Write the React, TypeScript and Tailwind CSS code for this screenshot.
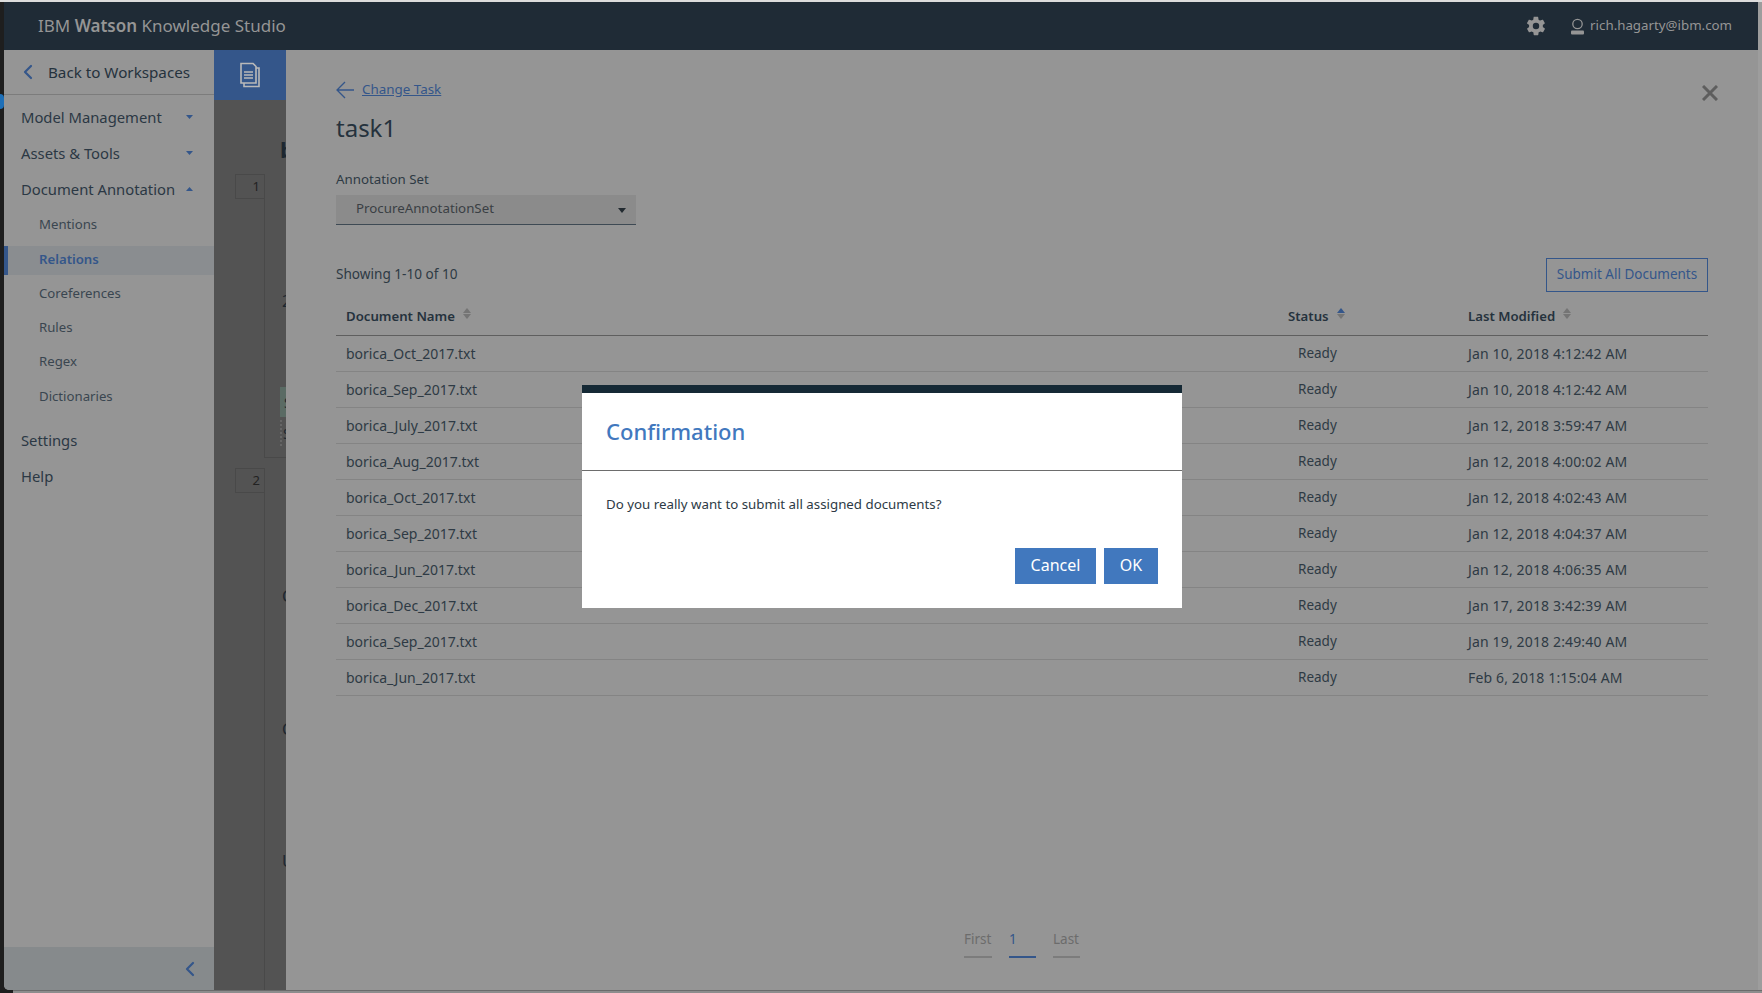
import React from "react";
import { ChevronLeft } from "lucide-react";

const FONT = "font-['Noto_Sans',sans-serif]";

const docs = [
  ["borica_Oct_2017.txt", "Jan 10, 2018 4:12:42 AM"],
  ["borica_Sep_2017.txt", "Jan 10, 2018 4:12:42 AM"],
  ["borica_July_2017.txt", "Jan 12, 2018 3:59:47 AM"],
  ["borica_Aug_2017.txt", "Jan 12, 2018 4:00:02 AM"],
  ["borica_Oct_2017.txt", "Jan 12, 2018 4:02:43 AM"],
  ["borica_Sep_2017.txt", "Jan 12, 2018 4:04:37 AM"],
  ["borica_Jun_2017.txt", "Jan 12, 2018 4:06:35 AM"],
  ["borica_Dec_2017.txt", "Jan 17, 2018 3:42:39 AM"],
  ["borica_Sep_2017.txt", "Jan 19, 2018 2:49:40 AM"],
  ["borica_Jun_2017.txt", "Feb 6, 2018 1:15:04 AM"],
];

const Caret = ({ up, color = "#34568a", w = 7, h = 4 }: { up?: boolean; color?: string; w?: number; h?: number }) => (
  <svg width={w} height={h} viewBox="0 0 8 5" preserveAspectRatio="none" className="shrink-0">
    <path d={up ? "M0 5 L4 0 L8 5 Z" : "M0 0 L4 5 L8 0 Z"} fill={color} />
  </svg>
);

const SortIcon = ({ active }: { active?: boolean }) => (
  <span className="ml-[8px] flex flex-col gap-[1px] -translate-y-[3px]">
    <Caret up w={8} h={5} color={active ? "#34568a" : "#757575"} />
    <Caret w={8} h={5} color="#757575" />
  </span>
);

const NavItem = ({ label, open }: { label: string; open?: boolean }) => (
  <div className="flex h-9 items-center justify-between pr-[21px] pl-[17px] text-[14.8px] text-[#2b3844]">
    <span>{label}</span>
    {open !== undefined && <Caret up={open} />}
  </div>
);

const SubItem = ({ label, h = "h-[34px]" }: { label: string; h?: string }) => (
  <div className={`flex items-center pl-[35px] text-[13.2px] text-[#3a4650] ${h}`}>{label}</div>
);

const Sidebar = () => (
  <aside className="flex w-[210px] shrink-0 flex-col rounded-bl-[5px] bg-[#959595]">
    <div className="flex h-[45px] items-center border-b border-[#7c7c7c]">
      <ChevronLeft size={24} strokeWidth={2.2} className="ml-[12px] text-[#34568a]" />
      <span className="ml-[8px] text-[15.2px] text-[#25323d]">Back to Workspaces</span>
    </div>
    <div className="mt-[4px]">
      <NavItem label="Model Management" open={false} />
      <NavItem label="Assets & Tools" open={false} />
      <NavItem label="Document Annotation" open />
      <SubItem label="Mentions" h="h-[39px] pb-[3px]" />
      <div className="flex h-[29px] items-center border-l-4 border-[#34568a] bg-[#8a8d90] pb-[2px] pl-[31px] text-[13.2px] font-semibold text-[#34568a]">
        Relations
      </div>
      <SubItem label="Coreferences" h="h-[36px] pt-[1px]" />
      <SubItem label="Rules" />
      <SubItem label="Regex" />
      <SubItem label="Dictionaries" h="h-[35px]" />
      <div className="h-[8px]" />
      <NavItem label="Settings" />
      <NavItem label="Help" />
    </div>
    <div className="mt-auto flex h-[43px] items-center justify-end rounded-bl-[5px] bg-[#868a8c] pr-[12px]">
      <ChevronLeft size={24} strokeWidth={2.2} className="text-[#34568a]" />
    </div>
  </aside>
);

// letters of the document view that stick out from under the task panel
const peeking = [
  { top: "top-[39px]", cls: "left-[66px] text-[22px] font-bold", text: "b" },
  { top: "top-[191px]", cls: "left-[68px] text-[16px]", text: "2" },
  { top: "top-[486px]", cls: "left-[68px] text-[16px]", text: "C" },
  { top: "top-[619px]", cls: "left-[68px] text-[16px]", text: "C" },
  { top: "top-[751px]", cls: "left-[68px] text-[16px]", text: "U" },
];

const Backdrop = () => (
  <div className="flex w-[72px] shrink-0 flex-col bg-[#535353]">
    <div className="flex h-[50px] shrink-0 items-center justify-center bg-[#34568a]">
      <svg width="22" height="26" viewBox="0 0 22 26" fill="none" stroke="#b9b9b9" strokeWidth="1.6">
        <path d="M2 1.500 H14 L17 4.500 V21 H2 Z" />
        <path d="M17 6 H20 V24.500 H5 V21" />
        <path d="M5 10 H14 M5 13 H14 M5 16 H14" />
      </svg>
    </div>
    <div className="relative flex-1 overflow-hidden text-[#1d2730]">
      <div className="absolute top-[74px] left-[21px] flex h-[25px] w-[30px] items-center justify-end border border-[#494949] pr-[4px] text-[13px] text-[#222]">
        1
      </div>
      <div className="absolute top-[74px] left-[50px] h-[284px] w-[40px] border-b border-l border-[#494949]" />
      <div className="absolute top-[368px] left-[21px] flex h-[25px] w-[30px] items-center justify-end border border-[#494949] pr-[4px] text-[13px] text-[#222]">
        2
      </div>
      <div className="absolute top-[368px] bottom-0 left-[50px] w-[40px] border-l border-[#494949]" />
      <div className="absolute top-[287px] left-[66px] flex h-[30px] w-[20px] items-center bg-[#5a6b64] pl-[4px] text-[14px]">S</div>
      <div className="absolute top-[320px] left-[66px] h-[26px] w-[20px] border-l-2 border-dotted border-[#666]" />
      <div className="absolute top-[326px] left-[69px] text-[14px] leading-[16px]">S</div>
      {peeking.map((p) => (
        <span key={p.top} className={`absolute leading-[20px] ${p.top} ${p.cls}`}>
          {p.text}
        </span>
      ))}
    </div>
  </div>
);

const TaskPanel = () => (
  <main className="relative flex flex-1 flex-col bg-[#959595] pr-[50px] pl-[50px]">
    <svg width="16" height="16" viewBox="0 0 16 16" className="absolute top-[35px] right-[40px]" stroke="#5e5e5e" strokeWidth="3">
      <path d="M1 1 L15 15 M15 1 L1 15" />
    </svg>
    <div className="mt-[31px] flex h-[18px] items-center">
      <svg width="18" height="18" viewBox="0 0 18 18" fill="none" stroke="#34568a" strokeWidth="1.300">
        <path d="M18 9 H1 M9 1 L1 9 L9 17" />
      </svg>
      <span className="ml-[8px] -translate-y-[1px] text-[13.4px] text-[#34568a] underline">Change Task</span>
    </div>
    <h1 className="mt-[11px] text-[24px] leading-[36px] text-[#25323d]">task1</h1>
    <label className="mt-[23px] text-[13.3px] leading-[20px] text-[#2e3a44]">Annotation Set</label>
    <div className="mt-[6px] flex h-[30px] w-[300px] items-center justify-between border-b border-[#3e4a54] bg-[#8b8b8b] pr-[10px] pl-[20px] text-[13.3px] text-[#3a3f44]">
      <span className="-translate-y-[1px]">ProcureAnnotationSet</span>
      <span className="translate-y-[1px]"><Caret color="#222a30" w={8} h={5} /></span>
    </div>
    <div className="mt-[33px] flex h-[34px] items-center justify-between">
      <span className="-translate-y-[1px] text-[13.6px] text-[#2e3a44]">Showing 1-10 of 10</span>
      <button className="h-[34px] w-[162px] border border-[#34568a] pb-[1px] text-[13.5px] text-[#34568a]">
        Submit All Documents
      </button>
    </div>
    <div className="mt-[6px] grid h-[38px] grid-cols-[942px_190px_1fr] items-center border-b border-[#5f5f5f] pt-[1px] text-[13.2px] font-semibold text-[#25323d]">
      <div className="flex items-center pl-[10px]">Document Name<SortIcon /></div>
      <div className="flex items-center pl-[10px]">Status<SortIcon active /></div>
      <div className="flex items-center">Last Modified<SortIcon /></div>
    </div>
    {docs.map(([name, modified], i) => (
      <div
        key={i}
        className="grid h-9 grid-cols-[942px_190px_1fr] items-center border-b border-[#848484] pb-[1px] text-[14px] text-[#2e3a44]"
      >
        <div className="pl-[10px]">{name}</div>
        <div className="pl-[20px] text-[13.5px]">Ready</div>
        <div className="tracking-[0.15px]">{modified}</div>
      </div>
    ))}
    <div className="absolute bottom-[32px] left-[678px] flex gap-[17px] text-[13.5px] text-[#6c6c6c]">
      <div className="w-[28px] border-b-2 border-[#7c7c7c] pb-[7px]">First</div>
      <div className="w-[27px] border-b-2 border-[#34568a] pb-[7px] text-[#34568a]">1</div>
      <div className="w-[27px] border-b-2 border-[#7c7c7c] pb-[7px]">Last</div>
    </div>
  </main>
);

const ConfirmModal = () => (
  <div className="absolute top-[385px] left-[582px] flex h-[223px] w-[600px] flex-col border-t-[8px] border-[#152935] bg-white">
    <div className="flex h-[78px] shrink-0 items-center border-b border-[#6d6d6d] pl-[24px] text-[22px] font-medium text-[#4178be]">
      Confirmation
    </div>
    <p className="mt-[23px] pl-[24px] text-[13.3px] leading-[20px] text-[#2d3a45]">
      Do you really want to submit all assigned documents?
    </p>
    <div className="mt-[34px] flex justify-end gap-[8px] pr-[24px]">
      <button className="h-[36px] w-[81px] bg-[#4178be] pb-[3px] text-[16px] text-white">Cancel</button>
      <button className="h-[36px] w-[54px] bg-[#4178be] pb-[3px] text-[16px] text-white">OK</button>
    </div>
  </div>
);

export default function App() {
  return (
    <div className={`relative flex h-[993px] w-[1762px] flex-col overflow-hidden bg-[#1e1e1e] ${FONT}`}>
      <div className="h-[2px] shrink-0 bg-[#dcdcdc]" />
      <div className="flex h-[988px] shrink-0">
        <div className="relative w-[4px] shrink-0">
          <div className="absolute top-[92px] left-0 h-[15px] w-[4px] rounded-r-full bg-[#1d6fb8]" />
        </div>
        <div className="flex min-w-0 flex-1 flex-col">
          <header className="flex h-[48px] shrink-0 items-center justify-between bg-[#1f2b36] pr-[26px] pl-[34px] text-[#959595]">
            <span className="text-[17px]">
              IBM <b className="font-semibold">Watson</b> Knowledge Studio
            </span>
            <div className="flex items-center">
              <svg width="22" height="22" viewBox="0 0 24 24" fill="#959595">
                <path d="M19.400 13c.1-.3.1-.7.1-1s0-.7-.1-1l2.100-1.600c.2-.2.2-.4.1-.6l-2-3.500c-.1-.2-.4-.3-.6-.2l-2.500 1c-.5-.4-1.100-.7-1.700-1l-.4-2.600c0-.3-.2-.5-.5-.5h-4c-.3 0-.5.2-.5.400l-.4 2.700c-.6.2-1.200.6-1.700 1l-2.500-1c-.2-.1-.5 0-.6.2l-2 3.500c-.1.2-.1.4.1.6L4.500 11c0 .3-.1.7-.1 1s0 .7.1 1l-2.100 1.600c-.2.2-.2.4-.1.6l2 3.500c.1.2.4.3.6.2l2.500-1c.5.4 1.100.7 1.700 1l.4 2.600c0 .3.2.5.5.5h4c.3 0 .5-.2.5-.4l.4-2.700c.6-.2 1.200-.6 1.700-1l2.500 1c.2.1.5 0 .6-.2l2-3.500c.1-.2.1-.4-.1-.6L19.400 13zM12 15.500a3.500 3.500 0 1 1 0-7 3.500 3.500 0 0 1 0 7z" />
              </svg>
              <svg width="15" height="17" viewBox="0 0 15 17" className="ml-[23px]" fill="none">
                <circle cx="7.500" cy="6" r="4.700" stroke="#959595" strokeWidth="1.300" />
                <rect x="1" y="12.500" width="13" height="4" rx="1" fill="#959595" />
              </svg>
              <span className="ml-[5px] text-[13.3px]">rich.hagarty@ibm.com</span>
            </div>
          </header>
          <div className="flex min-h-0 flex-1">
            <Sidebar />
            <Backdrop />
            <TaskPanel />
          </div>
        </div>
        <div className="w-[4px] shrink-0 bg-[#9d9d9d]" />
      </div>
      <div className="ml-[13px] h-[3px] shrink-0 overflow-hidden border-t border-[#6b6b6b] bg-[#8d8d8d] pl-[20px] text-[14px] leading-[18px] font-semibold text-[#333]">
        COMMITS
      </div>
      <ConfirmModal />
    </div>
  );
}
